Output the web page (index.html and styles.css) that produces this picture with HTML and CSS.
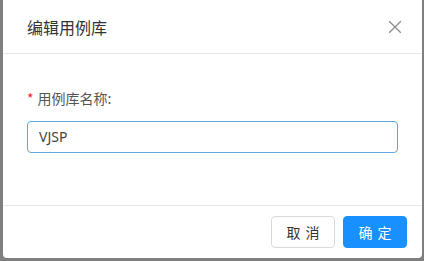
FILE: index.html
```html
<!DOCTYPE html>
<html lang="zh-CN">
<head>
<meta charset="utf-8">
<link rel="stylesheet" href="styles.css">
</head>
<body>
<div class="modal">
  <div class="modal-header">
    <div class="modal-title">编辑用例库</div>
    <div class="modal-close">
      <svg width="16" height="16" viewBox="0 0 16 16"><path d="M2.2 2.2 L13.8 13.8 M13.8 2.2 L2.2 13.8" stroke="#8c8c8c" stroke-width="1.3" fill="none"/></svg>
    </div>
  </div>
  <div class="modal-body">
    <div class="form-label"><span class="req">*</span>用例库名称:</div>
    <div class="input">VJSP</div>
  </div>
  <div class="modal-footer">
    <button class="btn">取消</button>
    <button class="btn btn-primary">确定</button>
  </div>
</div>
</body>
</html>
```
FILE: styles.css
```css
html, body {
  margin: 0;
  padding: 0;
  height: 100%;
}
body {
  background: #7f7f7f;
  font-family: "Noto Sans", "Noto Sans CJK SC", sans-serif;
  overflow: hidden;
}
.modal {
  margin-left: 3px;
  width: 419px;
  height: 258px;
  background: #fff;
  border-radius: 0 0 4px 4px;
  display: flex;
  flex-direction: column;
}
.modal-header {
  height: 53px;
  border-bottom: 1px solid #e8e8e8;
  display: flex;
  align-items: center;
  justify-content: space-between;
  padding: 0 19px 0 24px;
}
.modal-title {
  font-size: 16px;
  color: #333;
  line-height: 22px;
  font-family: "Noto Sans CJK SC", sans-serif;
}
.modal-close {
  width: 16px;
  height: 16px;
  display: flex;
}
.modal-body {
  height: 151px;
  box-sizing: border-box;
  padding: 33px 24px 0;
}
.form-label {
  font-size: 14px;
  line-height: 22px;
  color: #555;
  font-family: "Noto Sans CJK SC", sans-serif;
}
.req {
  color: #f5222d;
  margin-right: 4px;
}
.input {
  margin-top: 12px;
  height: 32px;
  box-sizing: border-box;
  border: 1px solid #5ea8dc;
  border-radius: 4px;
  padding: 0 11px;
  font-size: 14px;
  line-height: 30px;
  color: #444;
}
.modal-footer {
  border-top: 1px solid #e8e8e8;
  padding: 10px 15px 10px 16px;
  display: flex;
  justify-content: flex-end;
  gap: 8px;
}
.btn {
  width: 64px;
  height: 32px;
  box-sizing: border-box;
  border: 1px solid #d9d9d9;
  border-radius: 4px;
  background: #fff;
  color: #333;
  font-size: 14px;
  font-family: "Noto Sans CJK SC", sans-serif;
  padding: 0 0 0 5px;
  letter-spacing: 5px;
}
.btn-primary {
  background: #1890ff;
  border-color: #1890ff;
  color: #fff;
}
```
